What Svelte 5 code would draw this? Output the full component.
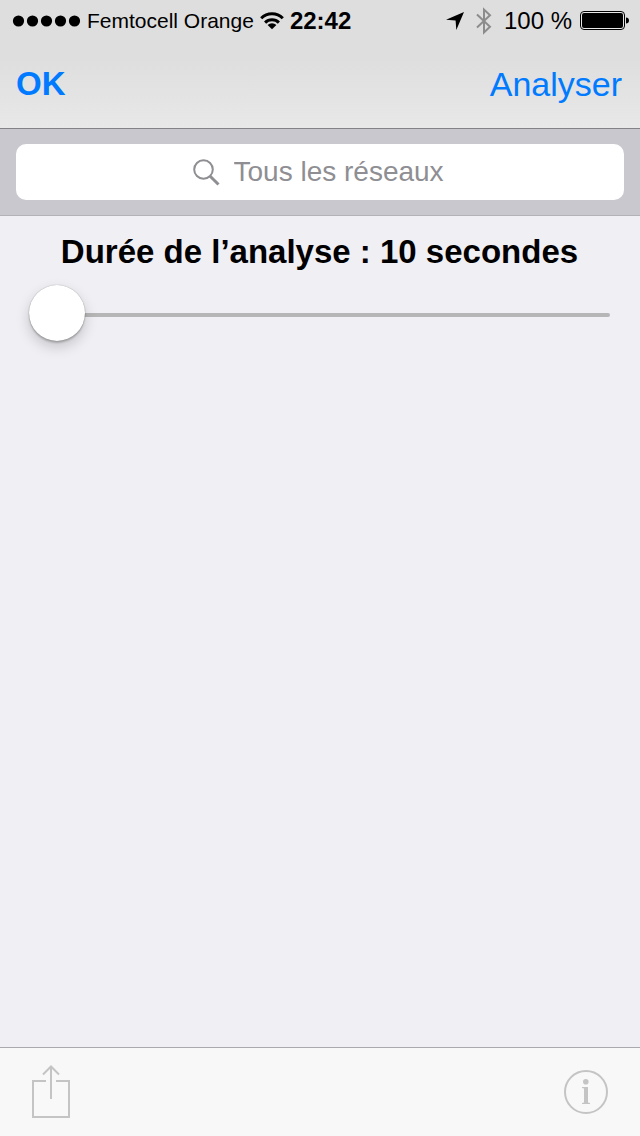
<script>
  let search = $state("");
  let duration = $state(10);
</script>

<div class="screen">
  <header>
    <div class="status">
      <div class="group left">
        <svg width="69" height="12" viewBox="0 0 69 12" aria-hidden="true">
          {#each [6.5, 20.5, 34.5, 48.5, 62.5] as cx}
            <circle {cx} cy="6" r="5.6" />
          {/each}
        </svg>
        <span class="carrier">Femtocell Orange</span>
        <svg width="24" height="18" viewBox="0 0 24 18" aria-hidden="true">
          <g fill="none" stroke="#000" stroke-width="3">
            <path d="M1.2 6.3a15.2 15.2 0 0 1 21.6 0" />
            <path d="M5.1 10.600a9.800 9.800 0 0 1 13.800 0" />
          </g>
          <path d="M12 17.300l-4.400-4.300a6.200 6.200 0 0 1 8.800 0z" />
        </svg>
        <span class="time">22:42</span>
      </div>
      <div class="group right">
        <svg width="18" height="18" viewBox="0 0 18 18" aria-hidden="true">
          <path d="M18 0L10.300 18 9.600 8.600 0 7.800z" />
        </svg>
        <svg class="bluetooth" width="16" height="28" viewBox="0 0 16 28" aria-hidden="true">
          <path d="M1 7.500l13 12.300-6 5.700V2.500l6 5.700L1 20.500" fill="none" stroke="#8c8c8c" stroke-width="2" />
        </svg>
        <span>100 %</span>
        <svg width="49" height="20" viewBox="0 0 49 20" aria-hidden="true">
          <rect x="0.5" y="0.5" width="44" height="18" rx="3.5" fill="#e8e8e8" stroke="#000" />
          <rect x="2" y="2" width="41" height="15" rx="2" />
          <path d="M46 6.500c1.800 0 3 1.200 3 3s-1.200 3-3 3z" />
        </svg>
      </div>
    </div>
    <nav>
      <button class="ok">OK</button>
      <button>Analyser</button>
    </nav>
  </header>

  <div class="search">
    <label>
      <svg width="27" height="27" viewBox="0 0 27 27" fill="none" stroke="#8e8e93" aria-hidden="true">
        <circle cx="10.500" cy="10.500" r="9.300" stroke-width="2" />
        <path d="M17.200 17.200l8.300 8.300" stroke-width="3" />
      </svg>
      <input type="text" placeholder="Tous les réseaux" aria-label="Tous les réseaux" bind:value={search} />
    </label>
  </div>

  <main>
    <label for="duration">Durée de l’analyse : {duration} secondes</label>
    <input id="duration" type="range" min="10" max="60" bind:value={duration} />
  </main>

  <footer>
    <button aria-label="Partager" disabled>
      <svg width="38" height="54" viewBox="0 0 38 54" fill="none" stroke="#c4c4c4" stroke-width="2">
        <path d="M14 16H1v36h36V16H24M19 2v32M11 9.500l8-8 8 8" />
      </svg>
    </button>
    <button aria-label="Informations" disabled>
      <svg width="44" height="44" viewBox="0 0 44 44" fill="#c4c4c4">
        <circle cx="22" cy="22" r="21" fill="none" stroke="#c4c4c4" stroke-width="2" />
        <circle cx="21.800" cy="11.700" r="2.800" />
        <path d="M18 17h6v15.500l2 .5v1h-8v-1l2-.5V18.500l-2-.5z" />
      </svg>
    </button>
  </footer>
</div>

<style>
  :global(body) { margin: 0; background: #efeff4; }
  .screen { display: flex; flex-direction: column; min-height: 100vh; font-family: "Liberation Sans", Arial, sans-serif; color: #000; }
  header { background: linear-gradient(#dedede 45%, #e8e8e8); border-bottom: 1px solid #828287; }
  button { padding: 0; border: none; background: none; font: inherit; color: #007aff; }
  svg { display: block; flex: none; }

  .status { display: flex; justify-content: space-between; height: 42px; padding: 0 11px 0 12px; white-space: nowrap; }
  .group { display: flex; align-items: center; font-size: 24px; }
  .left { gap: 6px; }
  .right { gap: 8px; }
  .carrier { font-size: 21px; }
  .time { font-weight: bold; }
  .bluetooth { margin: 0 4px; }
  nav { display: flex; justify-content: space-between; align-items: center; height: 84px; padding: 0 18px 2px 16px; font-size: 34px; }
  .ok { font-size: 33px; font-weight: bold; }

  .search { padding: 15px 16px; background: #c9c8ce; border-bottom: 1px solid #b2b2b7; }
  .search label { display: flex; align-items: center; justify-content: center; gap: 14px; height: 56px; border-radius: 10px; background: #fff; }
  .search input { width: 214px; padding: 0; border: none; outline: none; background: none; font: inherit; font-size: 28px; color: #000; }
  .search input::placeholder { color: #8e8e93; opacity: 1; }

  main { flex: 1; display: flex; flex-direction: column; padding: 16px 30px 0 29px; }
  main label { font-size: 33px; line-height: 40px; font-weight: bold; text-align: center; white-space: nowrap; }
  input[type="range"] { appearance: none; width: 100%; height: 56px; margin: 15px 0 0; background: none; }
  input[type="range"]::-webkit-slider-runnable-track { height: 4px; border-radius: 2px; background: #b6b6b6; }
  input[type="range"]::-webkit-slider-thumb { appearance: none; width: 56px; height: 56px; margin-top: -28px; border-radius: 50%; background: #fff; box-shadow: 0 0 1px rgba(0, 0, 0, 0.4), 0 2px 2px rgba(0, 0, 0, 0.2), 0 6px 14px rgba(0, 0, 0, 0.18); }

  footer { display: flex; justify-content: space-between; align-items: center; height: 88px; padding: 0 32px; background: #f8f8f8; border-top: 1px solid #aaaaae; }
</style>
